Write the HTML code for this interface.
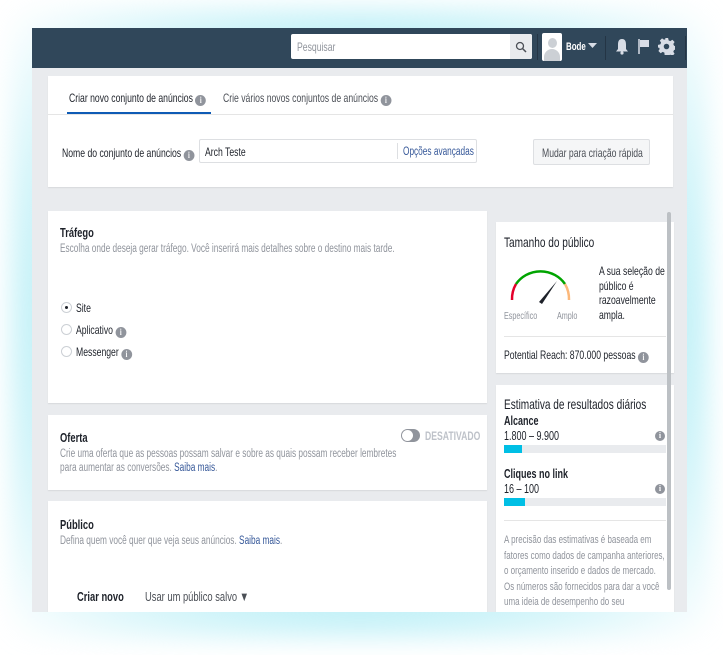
<!DOCTYPE html>
<html><head><meta charset="utf-8"><style>
*{margin:0;padding:0;box-sizing:border-box}
body{width:723px;height:655px;background:#fff;position:relative;overflow:hidden;font-family:"Liberation Sans",Arial,sans-serif;color:#1d2129}
.glow{position:absolute;left:10px;top:8px;width:700px;height:630px;background:radial-gradient(ellipse at center,#bff0f7 60%,rgba(255,255,255,0) 100%);filter:blur(12px)}
.frame{position:absolute;left:32px;top:28px;width:655px;height:584px;background:#e9ebee;overflow:hidden}
.hdr{position:absolute;left:0;top:0;width:655px;height:40px;background:#30475a}
.card{position:absolute;background:#fff;box-shadow:0 1px 1px rgba(0,0,0,.08);overflow:hidden}
.t{position:absolute;white-space:nowrap;transform:scaleX(.72);transform-origin:0 0;font-size:11.5px;line-height:14px}
.g{color:#90949c}
.b{font-weight:bold}
.a{color:#365899}
.i{display:inline-block;width:15px;height:11px;border-radius:50%;background:#90949c;color:#fff;font-size:9px;line-height:11px;text-align:center;font-weight:bold;vertical-align:-1px;font-family:"Liberation Serif",serif}
.ii{position:absolute;width:10px;height:10px;border-radius:50%;background:#90949c;color:#fff;font-size:8px;line-height:10px;text-align:center;font-weight:bold;font-family:"Liberation Serif",serif}
.r{position:absolute;width:11px;height:11px;border-radius:50%;border:1px solid #ccd0d5;background:#fff}
.bar{position:absolute;height:8px;background:#e9ebee}
.bar div{height:8px;background:#00bfe5}
</style></head><body>
<div class="glow"></div>
<div class="frame">
 <div class="hdr">
  <div style="position:absolute;left:259px;top:6px;width:241px;height:25px;background:#fff;border-radius:2px"></div>
  <div class="t g" style="left:265px;top:12px;font-size:12px">Pesquisar</div>
  <div style="position:absolute;left:478px;top:6px;width:22px;height:25px;background:#e9ebee;border-radius:0 2px 2px 0"></div>
  <svg style="position:absolute;left:483px;top:13px" width="12" height="12"><circle cx="5" cy="5" r="3.5" fill="none" stroke="#4b4f56" stroke-width="1.3"/><path d="M7.5 7.5L11 11" stroke="#4b4f56" stroke-width="1.5"/></svg>
  <div style="position:absolute;left:505px;top:6px;width:1px;height:26px;background:#243545"></div>
  <div style="position:absolute;left:510px;top:5px;width:20px;height:28px;background:#fff;border-radius:2px;overflow:hidden"><div style="position:absolute;left:6px;top:5px;width:9px;height:10px;border-radius:50%;background:#ccd0d5"></div><div style="position:absolute;left:2px;top:16px;width:16px;height:14px;border-radius:8px 8px 0 0;background:#ccd0d5"></div></div>
  <div class="t b" style="left:534px;top:12px;color:#fff;font-size:11px">Bode</div>
  <svg style="position:absolute;left:556px;top:15px" width="9" height="6"><path d="M0 0H9L4.5 5Z" fill="#d8dde6"/></svg>
  <div style="position:absolute;left:573px;top:8px;width:1px;height:24px;background:#243545"></div>
  <svg style="position:absolute;left:583px;top:10px" width="14" height="17"><path d="M7 1C3.5 1 3 4 3 7V11L1 13.5H13L11 11V7C11 4 10.5 1 7 1Z" fill="#d8dde6"/><circle cx="7" cy="15" r="1.6" fill="#d8dde6"/></svg>
  <svg style="position:absolute;left:606px;top:10px" width="12" height="17"><path d="M1 1V16" stroke="#d8dde6" stroke-width="1.5"/><path d="M2 2H11V9H2Z" fill="#d8dde6"/></svg>
  <svg style="position:absolute;left:626px;top:10px" width="17" height="17" viewBox="0 0 16 16"><path fill="#d8dde6" d="M6.5 0h3l.5 2.2 1.6.7 1.9-1.2 2.1 2.1-1.2 1.9.7 1.6 2.2.5v3l-2.2.5-.7 1.6 1.2 1.9-2.1 2.1-1.9-1.2-1.6.7-.5 2.2h-3L6 13.8l-1.6-.7-1.9 1.2L.4 12.2l1.2-1.9L.9 8.7 0 9.5v-3l2.2-.5.7-1.6-1.2-1.9L3.8.4l1.9 1.2L7.3.9z"/><circle cx="8" cy="8" r="2.6" fill="#30475a"/></svg>
  <div style="position:absolute;left:653px;top:8px;width:1px;height:24px;background:#243545"></div>
 </div>

 <div class="card" style="left:16px;top:48px;width:625px;height:111px">
  <div class="t" style="left:21px;top:15px;font-size:12px">Criar novo conjunto de anúncios <span class="i">i</span></div>
  <div style="position:absolute;left:19px;top:36px;width:144px;height:3px;background:#0e5bb5"></div>
  <div class="t" style="left:175px;top:15px;color:#4b4f56;font-size:12px">Crie vários novos conjuntos de anúncios <span class="i">i</span></div>
  <div style="position:absolute;left:0;top:38px;width:625px;height:1px;background:#e5e5e5"></div>
  <div class="t" style="left:14px;top:70px;font-size:12px">Nome do conjunto de anúncios <span class="i">i</span></div>
  <div style="position:absolute;left:151px;top:63px;width:278px;height:24px;border:1px solid #dddfe2;border-radius:2px"></div>
  <div class="t" style="left:157px;top:69px;font-size:12px">Arch Teste</div>
  <div style="position:absolute;left:349px;top:67px;width:1px;height:16px;background:#dddfe2"></div>
  <div class="t a" style="left:355px;top:69px">Opções avançadas</div>
  <div style="position:absolute;left:485px;top:63px;width:117px;height:26px;background:#f5f6f7;border:1px solid #dddfe2;border-radius:2px"></div>
  <div class="t" style="left:494px;top:70px;color:#4b4f56;font-size:12px">Mudar para criação rápida</div>
 </div>

 <div class="card" style="left:16px;top:183px;width:439px;height:192px">
  <div class="t b" style="left:12px;top:15px;font-size:13px">Tráfego</div>
  <div class="t g" style="left:12px;top:31px">Escolha onde deseja gerar tráfego. Você inserirá mais detalhes sobre o destino mais tarde.</div>
  <div class="r" style="left:13px;top:91px"><div style="position:absolute;left:3px;top:3px;width:3px;height:3px;border-radius:50%;background:#1d2129"></div></div>
  <div class="t" style="left:28px;top:90px;font-size:12px">Site</div>
  <div class="r" style="left:13px;top:113px"></div>
  <div class="t" style="left:28px;top:112px;font-size:12px">Aplicativo <span class="i">i</span></div>
  <div class="r" style="left:13px;top:135px"></div>
  <div class="t" style="left:28px;top:134px;font-size:12px">Messenger <span class="i">i</span></div>
 </div>

 <div class="card" style="left:16px;top:387px;width:439px;height:75px">
  <div class="t b" style="left:12px;top:16px;font-size:13px">Oferta</div>
  <div class="t g" style="left:12px;top:32px">Crie uma oferta que as pessoas possam salvar e sobre as quais possam receber lembretes</div>
  <div class="t g" style="left:12px;top:46px">para aumentar as conversões. <span class="a">Saiba mais</span>.</div>
  <div style="position:absolute;left:353px;top:14px;width:19px;height:13px;border-radius:7px;background:#90949c"><div style="position:absolute;left:1px;top:1px;width:11px;height:11px;border-radius:50%;background:#fff"></div></div>
  <div class="t b" style="left:377px;top:14px;color:#bec2c9;font-size:12px">DESATIVADO</div>
 </div>

 <div class="card" style="left:16px;top:473px;width:439px;height:120px">
  <div class="t b" style="left:12px;top:17px;font-size:13px">Público</div>
  <div class="t g" style="left:12px;top:33px">Defina quem você quer que veja seus anúncios. <span class="a">Saiba mais</span>.</div>
  <div class="t b" style="left:29px;top:89px;font-size:13px">Criar novo</div>
  <div class="t" style="left:97px;top:89px;color:#4b4f56;font-size:13px">Usar um público salvo ▼</div>
 </div>

 <div class="card" style="left:464px;top:194px;width:178px;height:151px">
  <div class="t" style="left:8px;top:13px;font-size:14px">Tamanho do público</div>
  <svg style="position:absolute;left:10px;top:40px" width="70" height="50"><path d="M6 38A30 30 0 0 1 10 22" stroke="#e4002b" stroke-width="2.5" fill="none"/><path d="M10 22A30 30 0 0 1 59 22" stroke="#00a400" stroke-width="2.5" fill="none"/><path d="M59 22A30 30 0 0 1 63 38" stroke="#fcb87a" stroke-width="2.5" fill="none"/><path d="M33 40L51 19L36 42Z" fill="#1d2129"/></svg>
  <div class="t g" style="left:8px;top:88px;font-size:10px">Específico</div>
  <div class="t g" style="left:61px;top:88px;font-size:10px">Amplo</div>
  <div class="t" style="left:103px;top:42px;line-height:14.6px;font-size:12px">A sua seleção de<br>público é<br>razoavelmente<br>ampla.</div>
  <div style="position:absolute;left:8px;top:114px;width:162px;height:1px;background:#e5e5e5"></div>
  <div class="t" style="left:8px;top:126px;font-size:12px">Potential Reach: 870.000 pessoas <span class="i">i</span></div>
 </div>

 <div class="card" style="left:464px;top:357px;width:178px;height:240px">
  <div class="t" style="left:8px;top:12px;font-size:14px">Estimativa de resultados diários</div>
  <div class="t b" style="left:8px;top:29px;font-size:12.5px">Alcance</div>
  <div class="t" style="left:8px;top:44px;font-size:12.5px">1.800 – 9.900</div>
  <span class="ii" style="left:159px;top:46px">i</span>
  <div class="bar" style="left:8px;top:60px;width:162px"><div style="width:18px"></div></div>
  <div class="t b" style="left:8px;top:82px;font-size:12.5px">Cliques no link</div>
  <div class="t" style="left:8px;top:97px;font-size:12.5px">16 – 100</div>
  <span class="ii" style="left:159px;top:99px">i</span>
  <div class="bar" style="left:8px;top:113px;width:162px"><div style="width:21px"></div></div>
  <div style="position:absolute;left:8px;top:135px;width:162px;height:1px;background:#e5e5e5"></div>
  <div class="t g" style="left:8px;top:148px;line-height:15.6px;font-size:11.1px">A precisão das estimativas é baseada em<br>fatores como dados de campanha anteriores,<br>o orçamento inserido e dados de mercado.<br>Os números são fornecidos para dar a você<br>uma ideia de desempenho do seu<br>orçamento, mas são apenas estimativas e</div>
 </div>
 <div style="position:absolute;left:635px;top:184px;width:4px;height:378px;border-radius:2px;background:#bcc0c4"></div>
</div>
</body></html>
